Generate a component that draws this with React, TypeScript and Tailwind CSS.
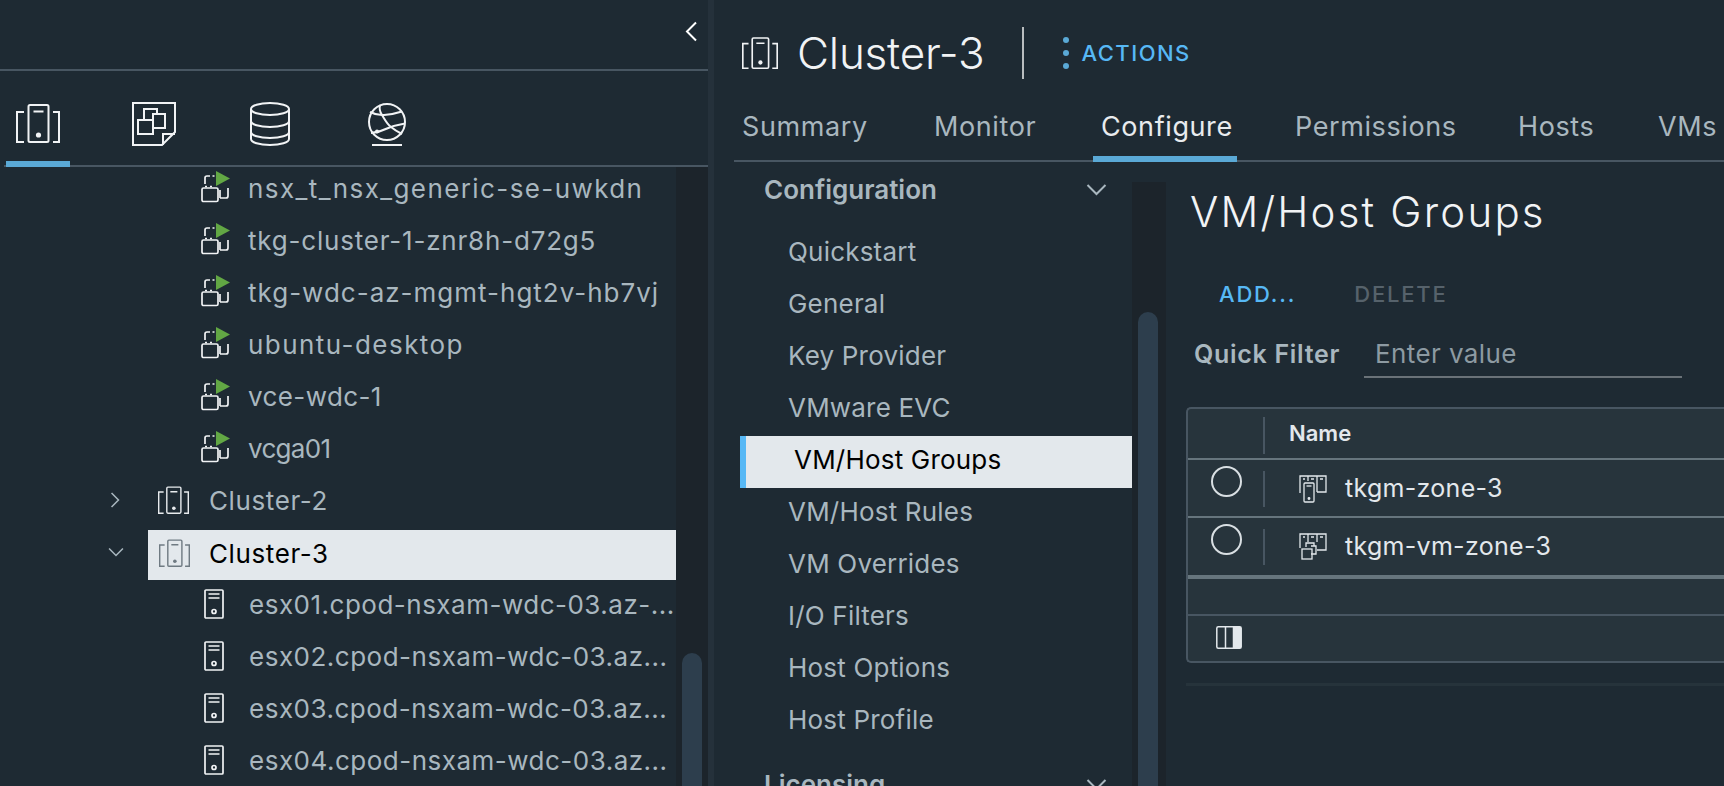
import React from 'react';

const FONT = 'font-["Inter","Liberation_Sans",sans-serif]';

function ClusterIcon({ className = '' }: { className?: string }) {
  return (
    <svg viewBox="0 0 44 40" fill="none" stroke="currentColor" strokeWidth="2" className={className}>
      <rect x="12.5" y="1" width="20" height="37" rx="1.5" />
      <path d="M17.5 7.5h10M8 8H1v30h7M37 8h6v30h-6" />
      <circle cx="22.5" cy="31" r="2.6" fill="currentColor" stroke="none" />
    </svg>
  );
}

function TemplateIcon({ className = '' }: { className?: string }) {
  return (
    <svg viewBox="0 0 44 44" fill="none" stroke="currentColor" strokeWidth="2" className={className}>
      <path d="M1 1h42v29L30 43H1z" />
      <path d="M31 43V32h12" />
      <path d="M12 17V7h13v5M21 18v-6h12v14H21" />
      <rect x="6" y="18" width="15" height="14" />
    </svg>
  );
}

function DatabaseIcon({ className = '' }: { className?: string }) {
  return (
    <svg viewBox="0 0 40 44" fill="none" stroke="currentColor" strokeWidth="2" className={className}>
      <path d="M1 7c0-3.500 8.500-6 19-6s19 2.500 19 6v30c0 3.500-8.500 6-19 6S1 40.500 1 37z" />
      <path d="M1 7c0 3.500 8.500 6 19 6s19-2.500 19-6M1 19c0 3.500 8.500 6 19 6s19-2.500 19-6M1 30c0 3.500 8.500 6 19 6s19-2.500 19-6" />
    </svg>
  );
}

function GlobeIcon({ className = '' }: { className?: string }) {
  return (
    <svg viewBox="0 0 40 44" fill="none" stroke="currentColor" strokeWidth="2" className={className}>
      <circle cx="20" cy="20" r="18" />
      <path d="M3 10c4 2 9 3.500 14 3 6-.5 12-1.500 18-3.500" />
      <path d="M13 3c-1 4 0 7 2 10 3 5 5 9 9 12 3 2.500 7 5 11 7" />
      <path d="M4 31c6-.5 11-2 16-4.500 6-2.500 12-4 18-5" />
      <circle cx="10" cy="29.500" r="2" fill="currentColor" stroke="none" />
      <path d="M5 43h30" />
    </svg>
  );
}

function VmIcon() {
  return (
    <span className="relative w-[30px] h-[30px] block shrink-0 text-[#f1f3f5]">
      <svg viewBox="0 0 30 30" fill="none" stroke="currentColor" strokeWidth="1.700" className="w-[30px] h-[30px]">
        <path d="M5 11V5a2 2 0 0 1 2-2h3M12.500 3h2M5 13.500h2M10 13.500h2" />
        <rect x="2" y="15" width="16" height="13.500" rx="1.500" />
        <path d="M20 25h6a2 2 0 0 0 2-2v-8M20 17v8" />
      </svg>
      <svg viewBox="0 0 14 15" className="absolute left-[16px] top-[-2px] w-[14px] h-[15px]">
        <path d="M0 0l14 7.500L0 15z" fill="#62a744" />
      </svg>
    </span>
  );
}

function HostIcon() {
  return (
    <svg viewBox="0 0 20 30" fill="none" stroke="#f1f3f5" strokeWidth="1.700" className="w-[20px] h-[30px] shrink-0">
      <rect x="1" y="1" width="18" height="28" rx="1" />
      <path d="M4.500 5h11M4.500 9h11" />
      <circle cx="10" cy="22.500" r="2" />
    </svg>
  );
}

function Chevron({ dir, className = '' }: { dir: 'left' | 'right' | 'down'; className?: string }) {
  const d = dir === 'left' ? 'M11 1L2 10l9 9' : dir === 'right' ? 'M2 1l9 9-9 9' : 'M1 2l9 9 9-9';
  return (
    <svg viewBox={dir === 'down' ? '0 0 20 13' : '0 0 13 20'} fill="none" stroke="currentColor" strokeWidth="2" className={className}>
      <path d={d} />
    </svg>
  );
}

const vms = [
  { name: 'nsx_t_nsx_generic-se-uwkdn', track: 'tracking-[1.400px]' },
  { name: 'tkg-cluster-1-znr8h-d72g5', track: 'tracking-[0.800px]' },
  { name: 'tkg-wdc-az-mgmt-hgt2v-hb7vj', track: 'tracking-[1px]' },
  { name: 'ubuntu-desktop', track: 'tracking-[1.450px]' },
  { name: 'vce-wdc-1', track: 'tracking-[0.400px]' },
  { name: 'vcga01', track: 'tracking-[-0.700px]' },
];
const hosts = ['esx01.cpod-nsxam-wdc-03.az-...', 'esx02.cpod-nsxam-wdc-03.az...', 'esx03.cpod-nsxam-wdc-03.az...', 'esx04.cpod-nsxam-wdc-03.az...'];
const configItems = ['Quickstart', 'General', 'Key Provider', 'VMware EVC', 'VM/Host Groups', 'VM/Host Rules', 'VM Overrides', 'I/O Filters', 'Host Options', 'Host Profile'];
const tabs = [
  { label: 'Summary', w: 'w-[140px]', mr: 'mr-[52px]' },
  { label: 'Monitor', w: 'w-[116px]', mr: 'mr-[51px]' },
  { label: 'Configure', w: 'w-[144px]', mr: 'mr-[50px]' },
  { label: 'Permissions', w: 'w-[172px]', mr: 'mr-[51px]' },
  { label: 'Hosts', w: 'w-[92px]', mr: 'mr-[48px]' },
  { label: 'VMs', w: 'w-[66px]', mr: '' },
];

function Tree() {
  return (
    <div className="flex-1 min-w-0 -mt-[5px]">
      {vms.map((vm) => (
        <div key={vm.name} className="h-[52px] flex items-center pl-[200px] gap-[18px]">
          <VmIcon />
          <span className={`text-[26px] text-[#a9b7bf] whitespace-nowrap ${vm.track}`}>{vm.name}</span>
        </div>
      ))}
      <div className="h-[52px] flex items-center">
        <Chevron dir="right" className="w-[10px] h-[16px] ml-[110px] text-[#a9b7bf]" />
        <ClusterIcon className="w-[31px] h-[29px] ml-[38px] text-[#e8ebee]" />
        <span className="ml-[20px] text-[26px] text-[#a9b7bf] tracking-[0.600px]">Cluster-2</span>
      </div>
      <div className="h-[52px] flex items-center">
        <Chevron dir="down" className="w-[16px] h-[10px] ml-[108px] shrink-0 text-[#a9b7bf]" />
        <div className="ml-[24px] mt-[6px] w-[528px] h-[50px] bg-[#e3e8ec] flex items-center pl-[11px] pb-[4px]">
          <ClusterIcon className="w-[31px] h-[29px] text-[#6f7a82]" />
          <span className="ml-[19px] text-[26px] text-black tracking-[0.600px]">Cluster-3</span>
        </div>
      </div>
      {hosts.map((name) => (
        <div key={name} className="h-[52px] flex items-center pl-[204px]">
          <HostIcon />
          <span className="ml-[25px] text-[26px] text-[#a9b7bf] whitespace-nowrap tracking-[0.500px]">{name}</span>
        </div>
      ))}
    </div>
  );
}

function LeftPanel() {
  return (
    <aside className="w-[708px] shrink-0 flex flex-col h-full">
      <div className="h-[71px] shrink-0 border-b-2 border-[#485662] flex justify-end items-center pr-[10px] pb-[6px]">
        <Chevron dir="left" className="w-[13px] h-[21px] text-white" />
      </div>
      <div className="h-[96px] shrink-0 flex items-start ml-[4px] border-b-2 border-[#485662] text-[#f1f3f5]">
        <div className="w-[64px] ml-[2px] h-[96px] border-b-[6px] border-[#5aa9d6] flex justify-center pt-[33px]">
          <ClusterIcon className="w-[44px] h-[40px]" />
        </div>
        <TemplateIcon className="w-[44px] h-[44px] ml-[62px] mt-[31px]" />
        <DatabaseIcon className="w-[40px] h-[44px] ml-[74px] mt-[31px]" />
        <GlobeIcon className="w-[40px] h-[44px] ml-[77px] mt-[31px]" />
      </div>
      <div className="flex-1 min-h-0 flex overflow-hidden">
        <Tree />
        <div className="w-[32px] shrink-0 bg-[#1c242b] pl-[6px] flex flex-col">
          <div className="mt-[486px] w-[20px] flex-1 bg-[#2d3e4d] rounded-t-[10px]" />
        </div>
      </div>
    </aside>
  );
}

function TableRow({ name, icon, border }: { name: string; icon: React.ReactNode; border: string }) {
  return (
    <div className={`h-[58px] flex ${border}`}>
      <div className="w-[75px] shrink-0 pl-[23px] pt-[6px]">
        <div className="w-[31px] h-[31px] rounded-full border-2 border-[#d9dfe3]" />
      </div>
      <div className="w-[2px] h-[36px] mt-[11px] bg-[#485662]" />
      <div className="flex items-center pl-[34px] pt-[1px]">
        {icon}
        <span className="ml-[18px] text-[25px] text-[#e3e8ec] tracking-[0.300px]">{name}</span>
      </div>
    </div>
  );
}

function ZoneHostIcon() {
  return (
    <svg viewBox="0 0 28 28" fill="none" stroke="#e3e8ec" strokeWidth="1.300" className="w-[28px] h-[28px] shrink-0">
      <path d="M1 18V1h26v16h-9M9 1v5M18 1v16M4 4h2M12 4h3M21 4h3" />
      <rect x="5" y="8" width="10" height="19" rx="1" />
      <path d="M7.500 11h5" />
      <circle cx="10" cy="23.500" r="0.800" fill="#e3e8ec" />
    </svg>
  );
}

function ZoneVmIcon() {
  return (
    <svg viewBox="0 0 28 28" fill="none" stroke="#e3e8ec" strokeWidth="1.300" className="w-[28px] h-[28px] shrink-0">
      <path d="M1 15V1h26v16h-9M9 1v8M18 1v8M4 4h2M12 4h3M21 4h3" />
      <path d="M7 14V10h8v3M12 13h5v8h-5" />
      <rect x="3" y="16" width="10" height="10" />
    </svg>
  );
}

function GroupsTable() {
  return (
    <div className="mt-[29px] w-[700px] h-[256px] bg-[#27343c] border-2 border-r-0 border-[#485662] rounded-l-[5px] flex flex-col">
      <div className="h-[51px] flex border-b-2 border-[#66757d]">
        <div className="w-[75px] shrink-0" />
        <div className="w-[2px] h-[37px] mt-[8px] bg-[#485662]" />
        <span className="ml-[24px] mt-[11px] text-[22px] leading-[26px] font-semibold text-[#e3e8ec]">Name</span>
      </div>
      <TableRow name="tkgm-zone-3" icon={<ZoneHostIcon />} border="border-b-2 border-[#66757d]" />
      <TableRow name="tkgm-vm-zone-3" icon={<ZoneVmIcon />} border="border-b-4 border-[#66757d] h-[61px]" />
      <div className="h-[37px] border-b-2 border-[#485662]" />
      <div className="flex-1 flex items-center pl-[28px] pb-[2px]">
        <svg viewBox="0 0 26 23" className="w-[26px] h-[23px]" fill="none" stroke="#e3e8ec" strokeWidth="1.500">
          <rect x="0.800" y="0.800" width="24.400" height="21.400" rx="1.500" />
          <path d="M9.500 1v21M17.500 1v21" />
          <rect x="17.500" y="1" width="7.500" height="21" fill="#e3e8ec" stroke="none" />
        </svg>
      </div>
    </div>
  );
}

function MainPanel() {
  return (
    <main className="flex-1 min-w-0 flex flex-col h-full">
      <div className="h-[106px] shrink-0 flex items-center pl-[28px]">
        <ClusterIcon className="w-[36px] h-[33px] text-[#f1f3f5]" />
        <h1 className="ml-[19px] text-[44px] font-light text-[#f1f3f5] tracking-[-0.200px]">Cluster-3</h1>
        <div className="ml-[37px] w-[2px] h-[52px] bg-[#b9bdbf]" />
        <div className="ml-[39px] flex flex-col gap-[7px]">
          <span className="w-[6px] h-[6px] rounded-full bg-[#5aa9d6]" />
          <span className="w-[6px] h-[6px] rounded-full bg-[#5aa9d6]" />
          <span className="w-[6px] h-[6px] rounded-full bg-[#5aa9d6]" />
        </div>
        <span className="ml-[13px] text-[22px] font-medium tracking-[1.450px] text-[#57b8f5]">ACTIONS</span>
      </div>
      <div className="h-[56px] shrink-0 ml-[20px] flex border-b-2 border-[#485662]">
        {tabs.map((t) => (
          <div
            key={t.label}
            className={`${t.w} ${t.mr} shrink-0 h-[56px] pl-[8px] pt-[4px] text-[27px] leading-[34px] tracking-[0.600px] ${
              t.label === 'Configure' ? 'text-[#e8ebee] border-b-[6px] border-[#5aa9d6]' : 'text-[#a9b7bf]'
            }`}
          >
            {t.label}
          </div>
        ))}
      </div>
      <div className="flex-1 min-h-0 flex overflow-hidden">
        <nav className="w-[418px] shrink-0 pl-[26px] flex flex-col">
          <div className="h-[54px] flex items-center justify-between pl-[24px] pr-[25px] shrink-0">
            <span className="text-[26px] font-semibold text-[#a9b7bf]">Configuration</span>
            <Chevron dir="down" className="w-[21px] h-[13px] text-[#a9b7bf]" />
          </div>
          <div className="mt-[12px]">
            {configItems.map((item) =>
              item === 'VM/Host Groups' ? (
                <div key={item} className="h-[52px] bg-[#e3e8ec] border-l-[6px] border-[#57b8f5] flex items-center pl-[48px] pb-[6px] text-[26px] text-black tracking-[0.200px]">
                  {item}
                </div>
              ) : (
                <div key={item} className="h-[52px] flex items-center pl-[48px] pb-[6px] text-[26px] text-[#a9b7bf] tracking-[0.200px]">
                  {item}
                </div>
              ),
            )}
          </div>
          <div className="h-[58px] mt-[7px] flex items-center justify-between pl-[24px] pr-[25px] shrink-0">
            <span className="text-[26px] font-semibold text-[#a9b7bf]">Licensing</span>
            <Chevron dir="down" className="w-[21px] h-[13px] text-[#a9b7bf]" />
          </div>
        </nav>
        <div className="w-[34px] shrink-0 mt-[20px] bg-[#1c242b] pl-[6px] flex flex-col">
          <div className="mt-[130px] w-[20px] flex-1 bg-[#2d3e4d] rounded-t-[10px]" />
        </div>
        <section className="flex-1 min-w-0 pl-[20px]">
          <h2 className="mt-[23px] h-[54px] text-[42px] leading-[54px] font-light text-[#f1f3f5] pl-[4px] tracking-[2.200px]">VM/Host Groups</h2>
          <div className="mt-[37px] h-[36px] flex items-center text-[22px] font-medium tracking-[1.800px] leading-[36px]">
            <span className="ml-[33px] text-[#57b8f5]">ADD...</span>
            <span className="ml-[58px] text-[#56626b]">DELETE</span>
          </div>
          <div className="mt-[18px] flex items-start h-[48px]">
            <span className="ml-[8px] text-[25px] font-semibold text-[#a9b7bf] leading-[48px] tracking-[0.700px] w-[170px] shrink-0">Quick Filter</span>
            <div className="w-[318px] h-[48px] border-b-2 border-[#6a7278] pl-[11px] text-[26px] leading-[48px] text-[#8d9aa2] tracking-[0.400px]">Enter value</div>
          </div>
          <GroupsTable />
          <div className="mt-[20px] h-[3px] w-[700px] bg-[#26333b]" />
        </section>
      </div>
    </main>
  );
}

export default function App() {
  return (
    <div className={`${FONT} w-[1724px] h-[786px] overflow-hidden bg-[#1e2a33] flex`}>
      <LeftPanel />
      <div className="w-[6px] shrink-0 bg-[#25313b]" />
      <MainPanel />
    </div>
  );
}
